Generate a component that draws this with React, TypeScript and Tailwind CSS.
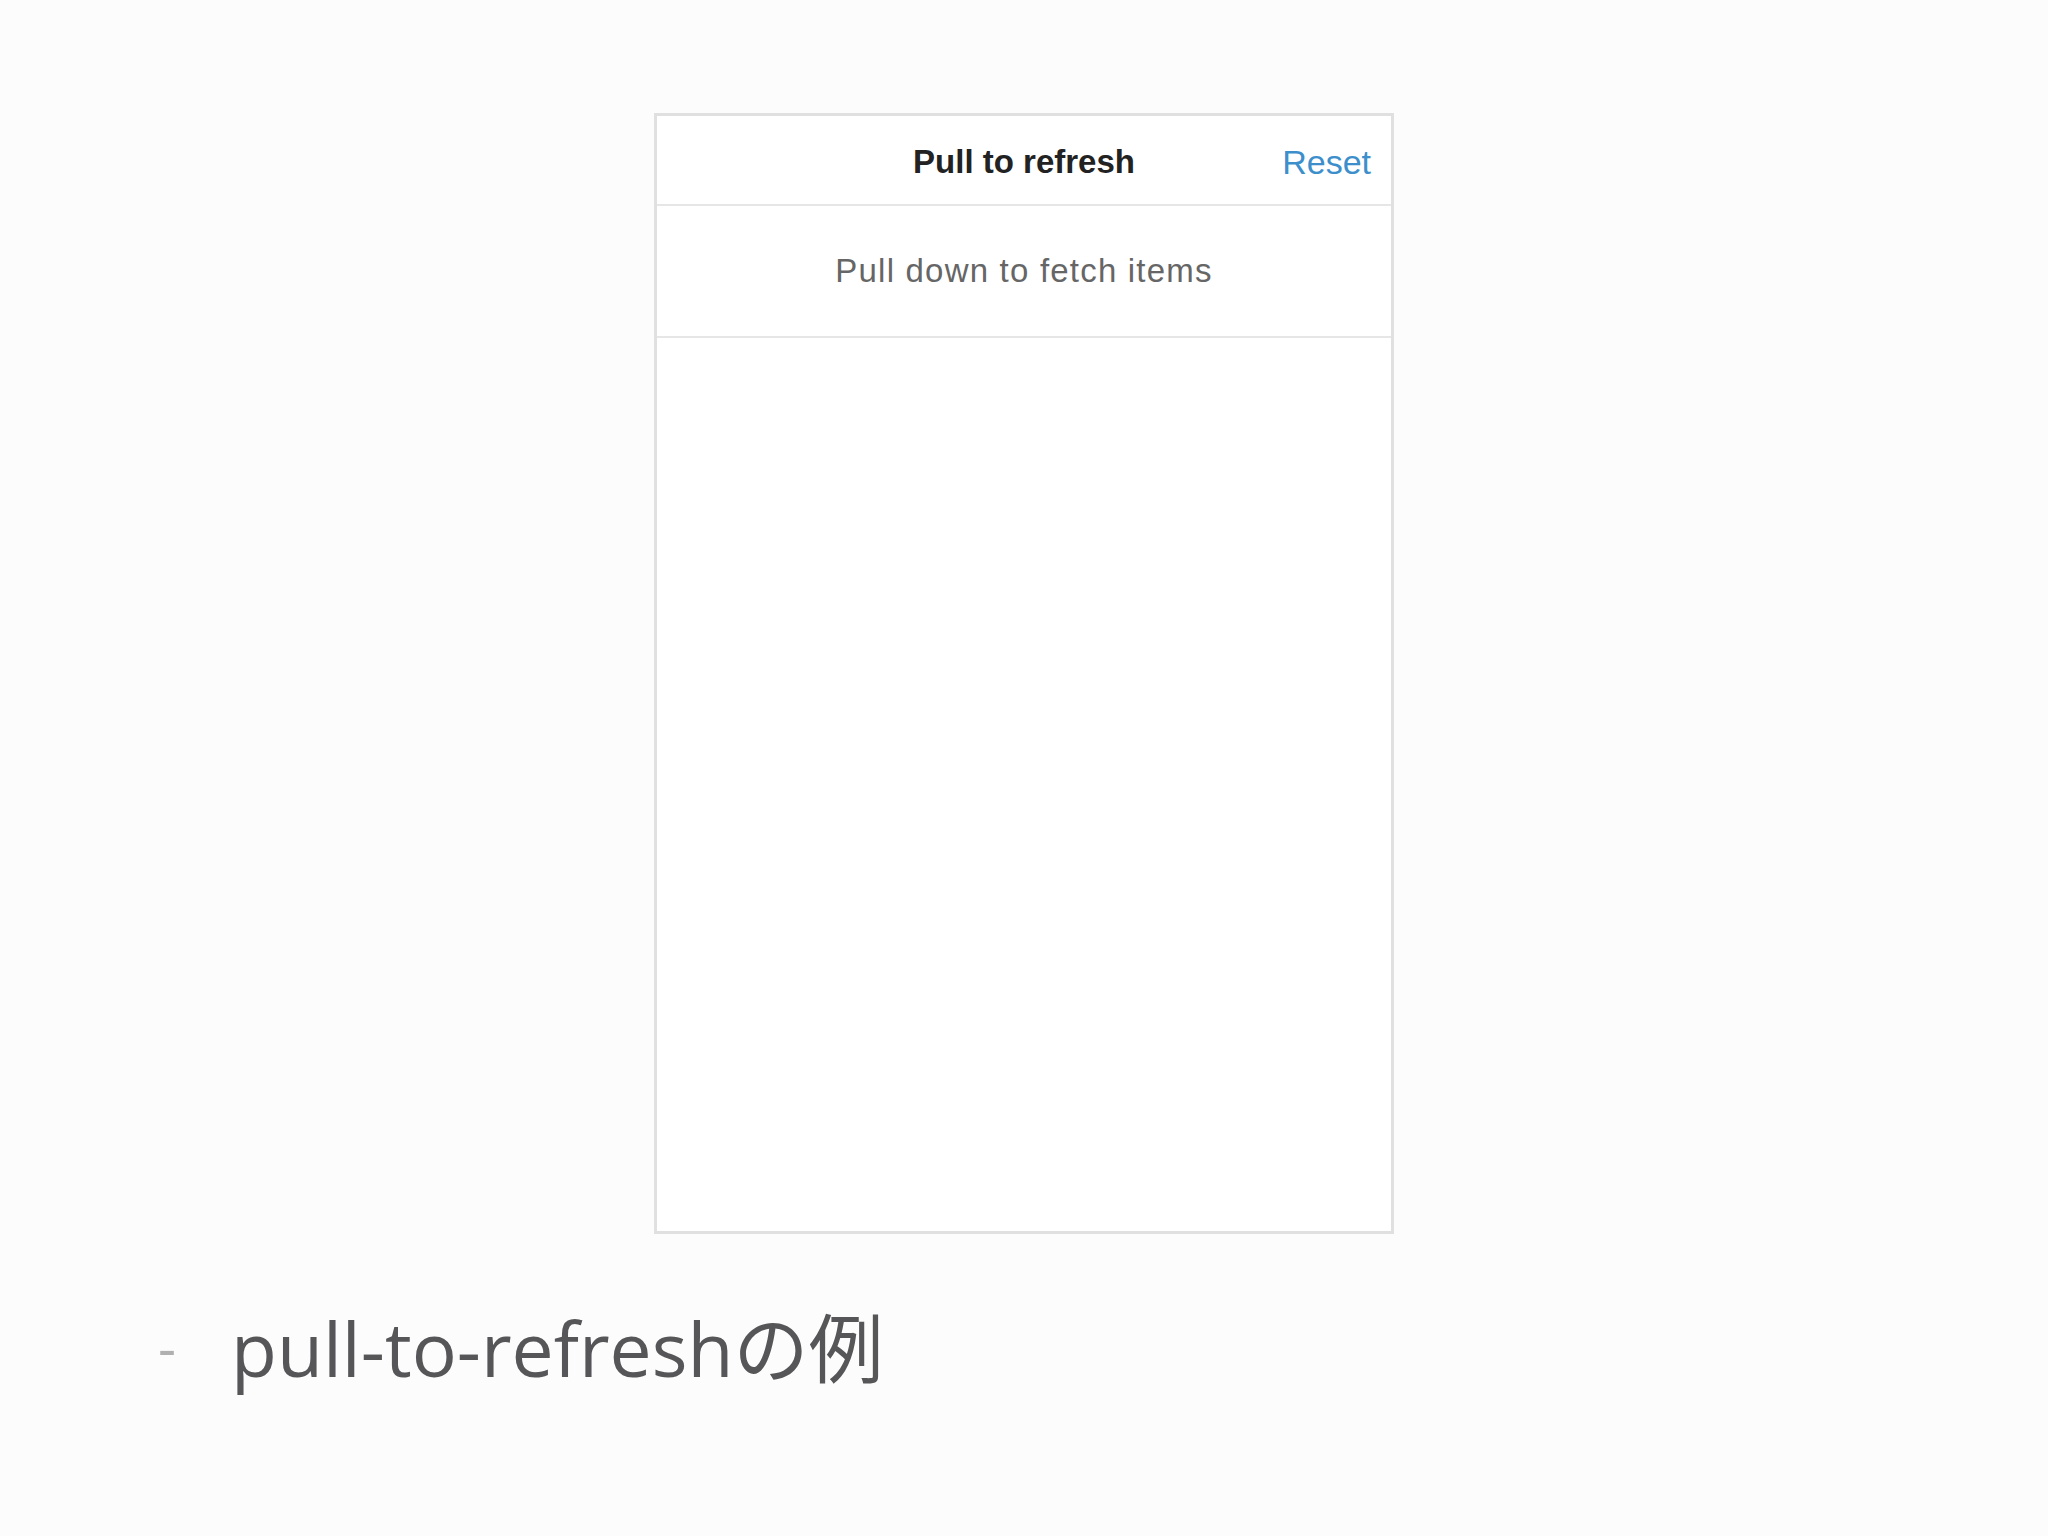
export default function App() {
  return (
    <div className="min-h-screen w-full bg-[#fcfcfc] flex flex-col" style={{ fontFamily: '"Liberation Sans", Arial, sans-serif' }}>
      <div className="mx-auto mt-[113px] w-[740px] h-[1121px] border-[3px] border-[#e0e0e0] bg-white flex flex-col">
        <div className="relative h-[90px] flex items-center justify-center pt-1 border-b-2 border-[#e6e6e6]">
          <span className="text-[33px] font-bold text-[#222]">Pull to refresh</span>
          <span className="absolute right-[20px] top-1/2 -translate-y-[46%] text-[34px] text-[#3d8fcc]">Reset</span>
        </div>
        <div className="h-[132px] flex items-center justify-center border-b-2 border-[#e6e6e6]">
          <span className="text-[33px] tracking-[1.2px] text-[#666]">Pull down to fetch items</span>
        </div>
      </div>
      <div className="mt-[58px] pl-[158px] flex items-baseline gap-[55px]" style={{ fontFamily: '"Open Sans", "Noto Sans CJK JP", sans-serif' }}>
        <span className="relative -top-[9px] text-[56px] text-[#b0b0b0]">-</span>
        <span className="text-[75px] text-[#565658]">pull-to-refreshの例</span>
      </div>
    </div>
  )
}
